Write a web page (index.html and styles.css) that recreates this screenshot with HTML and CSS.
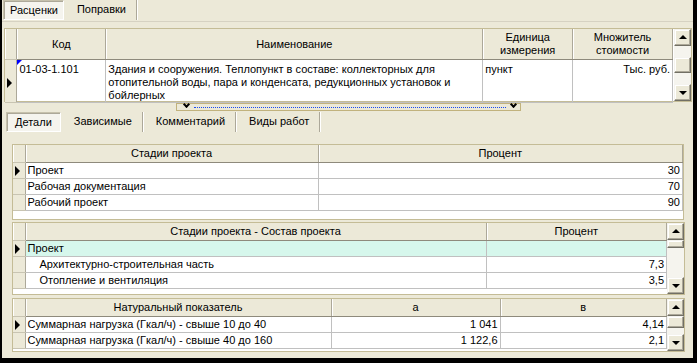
FILE: index.html
```html
<!DOCTYPE html>
<html lang="ru">
<head>
  <meta charset="UTF-8"/>
  <title>Расценки</title>
  <link rel="stylesheet" href="styles.css">
</head>
<body>
  <div class="app">
    <div class="tabs top-tabs">
      <div class="tab active">Расценки</div>
      <div class="tab">Поправки</div>
    </div>

    <div class="grid grid-main">
      <table>
        <colgroup>
          <col style="width:12px"><col style="width:89px"><col style="width:378px"><col style="width:90px"><col style="width:100px">
        </colgroup>
        <tr class="head tall">
          <th class="ind"></th>
          <th>Код</th>
          <th>Наименование</th>
          <th>Единица<br>измерения</th>
          <th>Множитель<br>стоимости</th>
        </tr>
        <tr class="big">
          <td class="ind"><span class="arrow"></span></td>
          <td class="code"><span class="corner"></span>01-03-1.101</td>
          <td class="wrap">Здания и сооружения. Теплопункт в составе: коллекторных для отопительной воды, пара и конденсата, редукционных установок и бойлерных</td>
          <td>пункт</td>
          <td class="num">Тыс. руб.</td>
        </tr>
      </table>
      <div class="vscroll">
        <div class="sbtn up"></div>
        <div class="track" style="height:11px"></div>
        <div class="thumb" style="height:16px"></div>
        <div class="track grow"></div>
        <div class="sbtn down"></div>
      </div>
    </div>

    <div class="splitter">
      <div class="split-box">
        <span class="chev"></span>
        <span class="dots"></span>
        <span class="chev"></span>
      </div>
    </div>

    <div class="tabs sub-tabs">
      <div class="tab active">Детали</div>
      <div class="tab">Зависимые</div>
      <div class="tab">Комментарий</div>
      <div class="tab">Виды работ</div>
    </div>

    <div class="page">
      <div class="grid grid-stages">
        <table>
          <colgroup>
            <col style="width:12px"><col style="width:293px"><col>
          </colgroup>
          <tr class="head">
            <th class="ind"></th>
            <th>Стадии проекта</th>
            <th>Процент</th>
          </tr>
          <tr>
            <td class="ind"><span class="arrow"></span></td>
            <td>Проект</td>
            <td class="num">30</td>
          </tr>
          <tr>
            <td class="ind"></td>
            <td>Рабочая документация</td>
            <td class="num">70</td>
          </tr>
          <tr>
            <td class="ind"></td>
            <td>Рабочий проект</td>
            <td class="num">90</td>
          </tr>
        </table>
      </div>

      <div class="grid grid-parts">
        <table>
          <colgroup>
            <col style="width:12px"><col style="width:461px"><col>
          </colgroup>
          <tr class="head">
            <th class="ind"></th>
            <th>Стадии проекта - Состав проекта</th>
            <th>Процент</th>
          </tr>
          <tr class="current">
            <td class="ind"><span class="arrow"></span></td>
            <td>Проект</td>
            <td class="num"></td>
          </tr>
          <tr>
            <td class="ind"></td>
            <td class="sub">Архитектурно-строительная часть</td>
            <td class="num">7,3</td>
          </tr>
          <tr>
            <td class="ind"></td>
            <td class="sub">Отопление и вентиляция</td>
            <td class="num">3,5</td>
          </tr>
        </table>
        <div class="vscroll">
          <div class="sbtn up"></div>
          <div class="thumb" style="height:8px"></div>
          <div class="track grow"></div>
          <div class="sbtn down"></div>
        </div>
      </div>

      <div class="grid grid-natural">
        <table>
          <colgroup>
            <col style="width:12px"><col style="width:306px"><col style="width:169px"><col>
          </colgroup>
          <tr class="head">
            <th class="ind"></th>
            <th>Натуральный показатель</th>
            <th>а</th>
            <th>в</th>
          </tr>
          <tr>
            <td class="ind"><span class="arrow"></span></td>
            <td>Суммарная нагрузка (Гкал/ч) - свыше 10 до 40</td>
            <td class="num">1 041</td>
            <td class="num">4,14</td>
          </tr>
          <tr>
            <td class="ind"></td>
            <td>Суммарная нагрузка (Гкал/ч) - свыше 40 до 160</td>
            <td class="num">1 122,6</td>
            <td class="num">2,1</td>
          </tr>
        </table>
        <div class="vscroll">
          <div class="sbtn up"></div>
          <div class="thumb" style="height:12px"></div>
          <div class="track grow"></div>
          <div class="sbtn down"></div>
        </div>
      </div>
    </div>
  </div>
</body>
</html>
```

FILE: styles.css
```css
* {
  margin: 0;
  padding: 0;
  box-sizing: border-box;
}
body {
  background: #000;
  width: 697px;
  height: 363px;
  overflow: hidden;
  font-family: 'Liberation Sans', Arial, sans-serif;
  font-size: 11px;
  color: #000;
}
.app {
  margin-left: 2px;
  width: 691px;
  height: 358px;
  background: #ece9d8;
  display: flex;
  flex-direction: column;
}

/* tabs */
.tabs {
  display: flex;
  flex-shrink: 0;
}
.top-tabs {
  height: 22px;
  padding-left: 1px;
  border-bottom: 1px solid #d6d2c2;
}
.sub-tabs {
  height: 22px;
  padding: 1px 0 0 4px;
}
.tab {
  height: 20px;
  line-height: 19px;
  padding: 0 10px 0 11px;
  border-right: 1px solid #aca899;
  box-shadow: 1px 0 0 #fff;
  margin-right: 2px;
}
.tab.active {
  background: #f5f4ee;
  border: 1px solid #c6c1ac;
  border-right-color: #fff;
  border-bottom-color: #fff;
  box-shadow: inset 1px 1px 0 #aca899;
  padding: 0 8px;
}
.top-tabs .tab.active {
  padding: 0 5px 0 6px;
}

/* grids */
.grid {
  display: flex;
  border: 1px solid #c4bc96;
  background: #fff;
  flex-shrink: 0;
}
.grid table {
  border-collapse: collapse;
  table-layout: fixed;
  flex: 1;
  align-self: flex-start;
}
.grid th {
  background: #ece9d8;
  font-weight: normal;
  text-align: center;
  height: 17px;
  line-height: 13px;
  border-right: 1px solid #aca899;
  border-bottom: 1px solid #8e8a7c;
  box-shadow: inset 1px 0 0 #fff;
  white-space: nowrap;
  overflow: hidden;
}
.grid .head.tall th {
  height: 30px;
  padding-top: 1px;
}
.grid td {
  height: 16px;
  line-height: 14px;
  padding: 0 2px 0 2px;
  border-right: 1px solid #c0c0c0;
  border-bottom: 1px solid #c0c0c0;
  white-space: nowrap;
  overflow: hidden;
  vertical-align: top;
}
.grid tr.big td {
  height: 43px;
  line-height: 13px;
  padding-top: 3px;
}
.grid td.wrap {
  white-space: normal;
}
.grid td.num {
  text-align: right;
}
.grid td.sub {
  padding-left: 14px;
}
.grid tr.current td {
  background: #d6f7ec;
}
.grid .ind,
.grid tr.current td.ind {
  background: #ece9d8;
  border-right: 1px solid #aca899;
  border-bottom: 1px solid #c8c4b2;
  position: relative;
  padding: 0;
}
.arrow {
  position: absolute;
  left: 2px;
  top: 3px;
  border-left: 5px solid #000;
  border-top: 5px solid transparent;
  border-bottom: 5px solid transparent;
}
.big .arrow {
  top: 18px;
}
.code {
  position: relative;
}
.corner {
  position: absolute;
  left: 0;
  top: 0;
  border-top: 5px solid #0000ff;
  border-right: 5px solid transparent;
}

.grid-main {
  margin: 6px 1px 0 2px;
  height: 74px;
}
.grid-main .vscroll {
  margin-left: 1px;
}

/* scrollbars */
.vscroll {
  width: 17px;
  flex-shrink: 0;
  display: flex;
  flex-direction: column;
  background: #ece9d8;
}
.sbtn,
.thumb {
  background: #ece9d8;
  border: 1px solid;
  border-color: #f4f3ee #716f64 #716f64 #f4f3ee;
  box-shadow: inset -1px -1px 0 #aca899, inset 1px 1px 0 #fff;
}
.sbtn {
  height: 17px;
  position: relative;
}
.sbtn::after {
  content: '';
  position: absolute;
  left: 4px;
  border-left: 4px solid transparent;
  border-right: 4px solid transparent;
}
.sbtn.up::after {
  top: 5px;
  border-bottom: 4px solid #000;
}
.sbtn.down::after {
  top: 6px;
  border-top: 4px solid #000;
}
.track {
  background: #f5f4ee;
}
.track.grow {
  flex: 1;
}

/* splitter */
.splitter {
  height: 9px;
  flex-shrink: 0;
  padding: 1px 0 0 174px;
}
.split-box {
  width: 345px;
  height: 8px;
  border: 1px solid #c1b27d;
  display: flex;
  align-items: center;
  padding: 0 3px 0 6px;
}
.chev {
  width: 7px;
  height: 4px;
  position: relative;
  flex-shrink: 0;
}
.chev::after {
  content: '';
  position: absolute;
  left: 1px;
  top: -3px;
  width: 3px;
  height: 3px;
  border-right: 2px solid #000;
  border-bottom: 2px solid #000;
  transform: rotate(45deg);
}
.dots {
  flex: 1;
  margin: 0 4px;
  border-top: 1px dotted #1a4cf0;
}

/* detail page */
.page {
  flex: 1;
  display: flex;
  flex-direction: column;
  padding: 11px 0 0 10px;
}
.grid-stages {
  width: 672px;
  height: 76px;
}
.grid-parts {
  width: 673px;
  height: 73px;
  margin-top: 2px;
}
.grid-natural {
  width: 673px;
  height: 54px;
  margin-top: 3px;
}
```
